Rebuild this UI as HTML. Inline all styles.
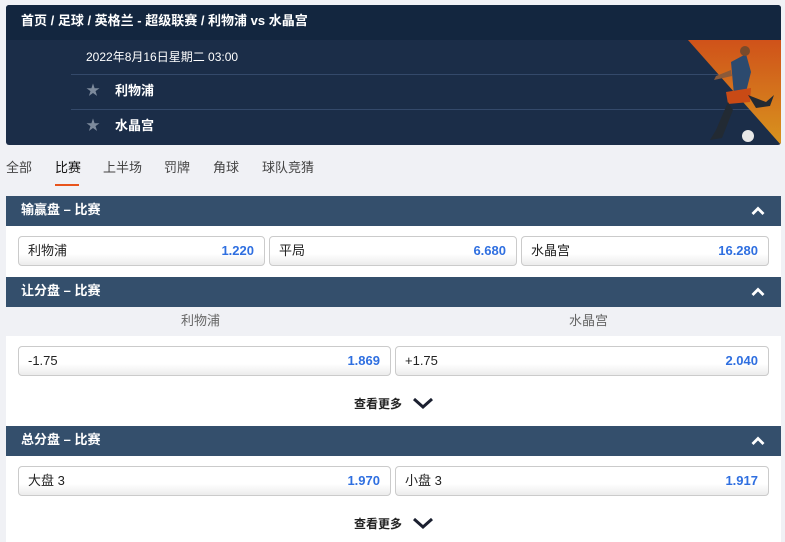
<!DOCTYPE html>
<html><head><meta charset="utf-8"><style>
*{margin:0;padding:0;box-sizing:border-box}
body{width:785px;height:542px;overflow:hidden;background:#f0f1f5;font-family:"Liberation Sans","Noto Sans CJK SC",sans-serif;font-size:13px;line-height:16px;color:#222;position:relative}
.abs{position:absolute}
.card{left:6px;top:5px;width:775px;height:140px;background:#1b2d48;border-radius:3px;overflow:hidden}
.top{left:0;top:0;width:775px;height:35px;background:#13263f;color:#fff;font-weight:bold;font-size:13px;padding:8px 0 0 15px}
.line{left:65px;height:1px;width:710px;background:#34496a}
.w{color:#fff}
.star{color:#7d8a9c;font-size:14px;line-height:14px}
.tabs span{position:absolute;top:160px;font-size:13px;color:#444}
.hdr{left:6px;width:775px;height:30px;background:#344f6c;color:#fff;font-weight:bold;padding:6px 0 0 15px}
.hdr svg{position:absolute;right:16px;top:10px}
.white{left:6px;width:775px;background:#fff}
.btn{position:absolute;height:30px;border:1px solid #cbcbcb;border-radius:4px;background:linear-gradient(#fff 60%,#ececec);padding:6px 9px;font-size:13px;line-height:16px}
.btn b{position:absolute;right:10px;top:6px;color:#2f6fe0;line-height:16px}
.more{position:absolute;left:354px;font-weight:bold;font-size:12px;color:#222}
.more svg{position:absolute;left:58px;top:1px}
</style></head><body>
<div class="abs card">
 <div class="abs top">首页 / 足球 / 英格兰 - 超级联赛 / 利物浦 vs 水晶宫</div>
 <div class="abs w" style="left:80px;top:44px;font-size:12px">2022年8月16日星期二 03:00</div>
 <div class="abs line" style="top:69px"></div>
 <div class="abs line" style="top:104px"></div>
 <div class="abs star" style="left:80px;top:78px">★</div>
 <div class="abs w" style="left:109px;top:78px;font-weight:bold">利物浦</div>
 <div class="abs star" style="left:80px;top:113px">★</div>
 <div class="abs w" style="left:109px;top:113px;font-weight:bold">水晶宫</div>
 <svg class="abs" style="left:680px;top:35px" width="95" height="105"><defs><linearGradient id="g" x1="0" y1="0" x2="0" y2="1"><stop offset="0" stop-color="#d0521a"/><stop offset="1" stop-color="#d8941e"/></linearGradient></defs><polygon points="2,0 95,0 95,105" fill="url(#g)"/>
 <path d="M45 22 L60 14 L65 32 L60 52 L48 55 Z" fill="#2c4a6e"/><path d="M40 52 L65 48 L64 62 L42 64Z" fill="#c94a15"/><path d="M42 62 L30 90 L24 100 L36 98 L47 70Z" fill="#222a33"/><path d="M62 55 L80 62 L88 55 L84 66 L70 68Z" fill="#222a33"/><path d="M45 30 L30 36 L28 40 L46 36Z" fill="#8a5a3a"/><circle cx="59" cy="11" r="5" fill="#7a4a2a"/><circle cx="62" cy="96" r="6" fill="#e8e8e8"/></svg>
</div>
<div class="tabs">
 <span style="left:6px">全部</span><span style="left:55px;color:#111">比赛</span><span style="left:103px">上半场</span><span style="left:164px">罚牌</span><span style="left:213px">角球</span><span style="left:262px">球队竞猜</span>
</div>
<div class="abs" style="left:55px;top:184px;width:24px;height:2px;background:#e8541c"></div>

<div class="abs hdr" style="top:196px">输赢盘 – 比赛<svg width="14" height="10"><path d="M1.5 8 L7 2.5 L12.5 8" stroke="#fff" stroke-width="2.8" fill="none"/></svg></div>
<div class="abs white" style="top:226px;height:51px"></div>
<div class="btn" style="left:18px;top:236px;width:247px">利物浦<b>1.220</b></div>
<div class="btn" style="left:269px;top:236px;width:248px">平局<b>6.680</b></div>
<div class="btn" style="left:521px;top:236px;width:248px">水晶宫<b>16.280</b></div>

<div class="abs hdr" style="top:277px">让分盘 – 比赛<svg width="14" height="10"><path d="M1.5 8 L7 2.5 L12.5 8" stroke="#fff" stroke-width="2.8" fill="none"/></svg></div>
<div class="abs" style="left:181px;top:313px;color:#666">利物浦</div>
<div class="abs" style="left:569px;top:313px;color:#666">水晶宫</div>
<div class="abs white" style="top:336px;height:90px"></div>
<div class="btn" style="left:18px;top:346px;width:373px">-1.75<b>1.869</b></div>
<div class="btn" style="left:395px;top:346px;width:374px">+1.75<b>2.040</b></div>
<div class="more" style="top:396px">查看更多<svg width="22" height="13"><path d="M2 2 L11 10 L20 2" stroke="#1b2030" stroke-width="3" fill="none"/></svg></div>

<div class="abs hdr" style="top:426px">总分盘 – 比赛<svg width="14" height="10"><path d="M1.5 8 L7 2.5 L12.5 8" stroke="#fff" stroke-width="2.8" fill="none"/></svg></div>
<div class="abs white" style="top:456px;height:86px"></div>
<div class="btn" style="left:18px;top:466px;width:373px">大盘 3<b>1.970</b></div>
<div class="btn" style="left:395px;top:466px;width:374px">小盘 3<b>1.917</b></div>
<div class="more" style="top:516px">查看更多<svg width="22" height="13"><path d="M2 2 L11 10 L20 2" stroke="#1b2030" stroke-width="3" fill="none"/></svg></div>
</body></html>
